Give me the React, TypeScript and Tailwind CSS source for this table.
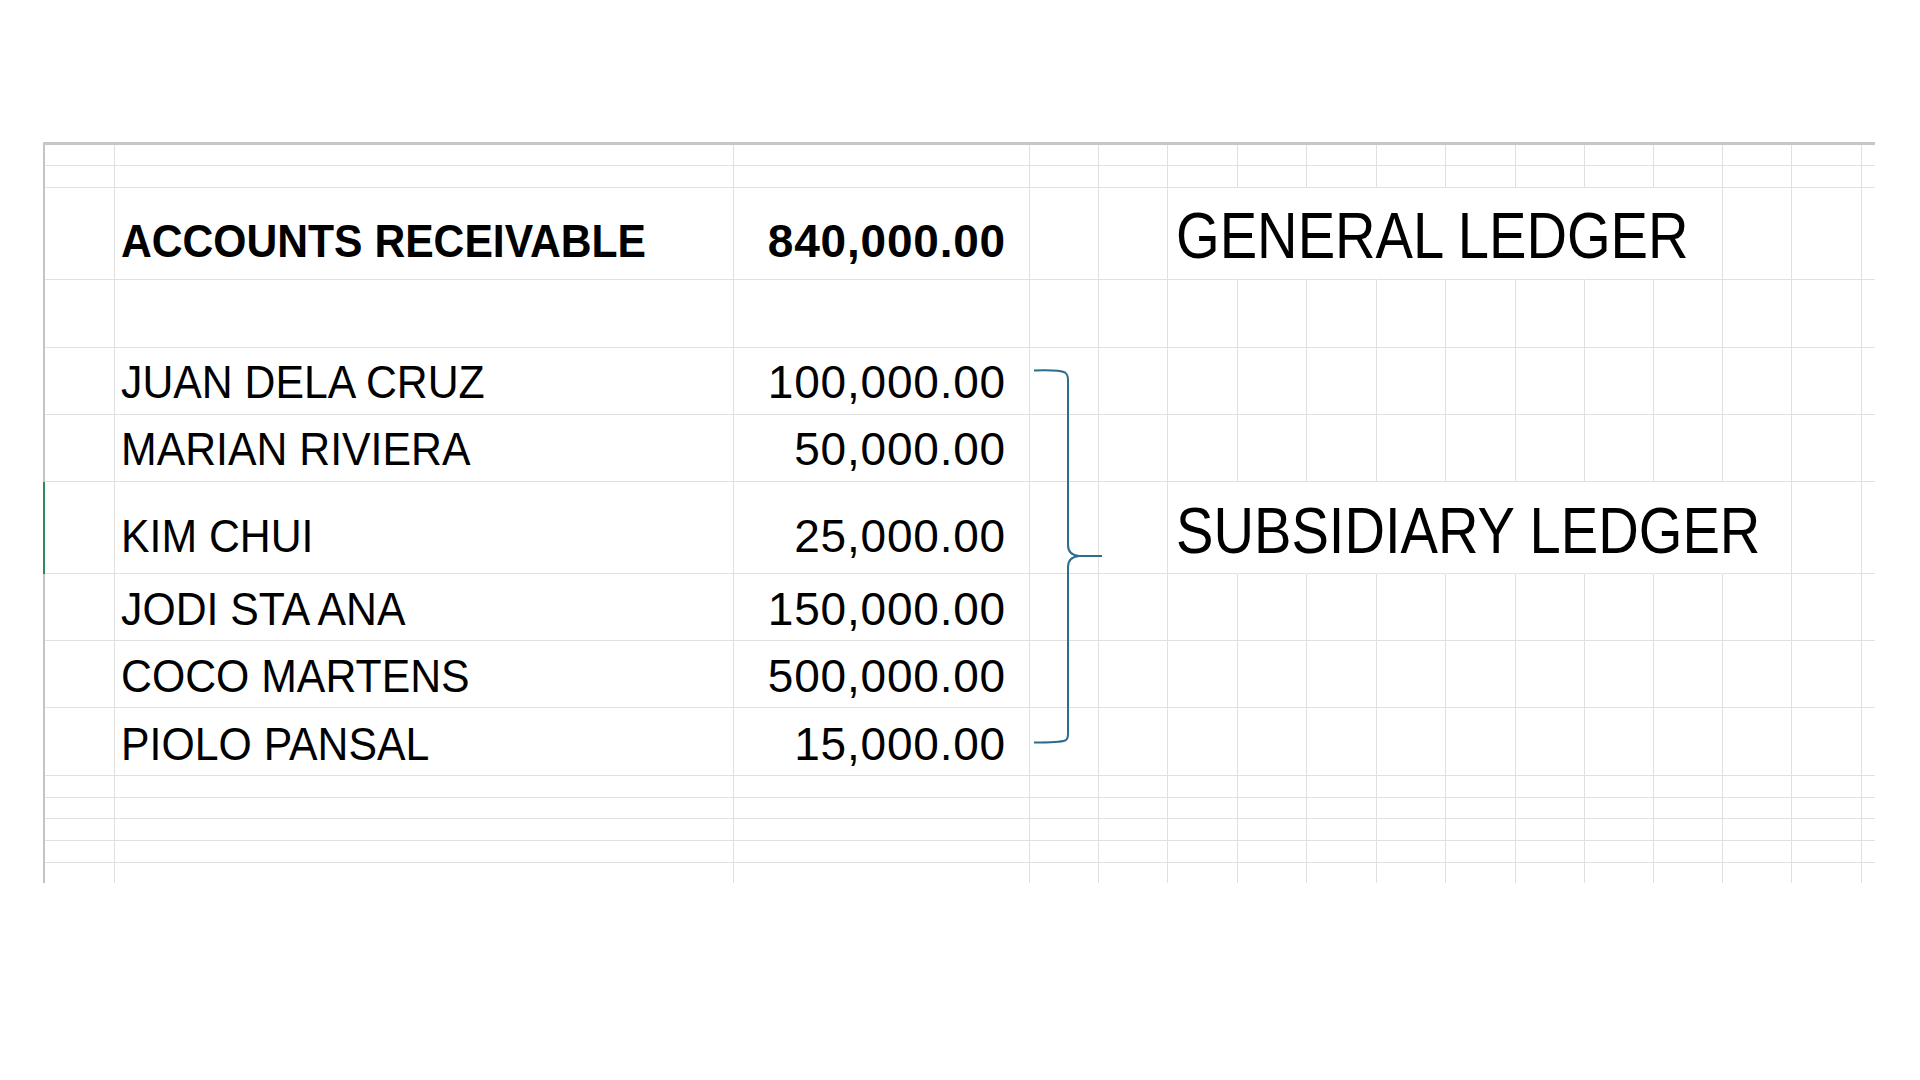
import React from "react";

type Line = {
  height: string;
  name?: string;
  amount?: string;
  ledger?: string;
  header?: boolean;
  selected?: boolean;
  pad?: string;
  ledgerPad?: string;
  overflowTo?: number;
  last?: boolean;
};

// column widths follow the sheet: A, B, C, then the narrow D..P
const GRID =
  "grid grid-cols-[70px_619px_296px_69px_69px_70px_69px_70px_69px_70px_69px_69px_69px_69px_70px_13px]";

const rows: Line[] = [
  { height: "h-[21px]" },
  { height: "h-[22px]" },
  {
    height: "h-[92px]",
    name: "ACCOUNTS RECEIVABLE",
    amount: "840,000.00",
    ledger: "GENERAL LEDGER",
    header: true,
    pad: "pb-[15px]",
    ledgerPad: "pb-[11px]",
    overflowTo: 11,
  },
  { height: "h-[68px]" },
  { height: "h-[67px]", name: "JUAN DELA CRUZ", amount: "100,000.00", pad: "pb-[9px]" },
  { height: "h-[67px]", name: "MARIAN RIVIERA", amount: "50,000.00", pad: "pb-[9px]" },
  {
    height: "h-[92px]",
    name: "KIM CHUI",
    amount: "25,000.00",
    ledger: "SUBSIDIARY LEDGER",
    selected: true,
    pad: "pb-[14px]",
    ledgerPad: "pb-[10px]",
    overflowTo: 12,
  },
  { height: "h-[67px]", name: "JODI STA ANA", amount: "150,000.00", pad: "pb-[8px]" },
  { height: "h-[67px]", name: "COCO MARTENS", amount: "500,000.00", pad: "pb-[8px]" },
  { height: "h-[68px]", name: "PIOLO PANSAL", amount: "15,000.00", pad: "pb-[8px]" },
  { height: "h-[22px]" },
  { height: "h-[21px]" },
  { height: "h-[22px]" },
  { height: "h-[22px]" },
  { height: "h-[20px]", last: true },
];

const font = "font-['Liberation_Sans',Arial,sans-serif] text-black";

function SheetRow({ row }: { row: Line }) {
  const cells = Array.from({ length: 16 }, (_, i) => i);
  return (
    <div
      className={`${GRID} ${row.height} border-l-2 ${
        row.selected ? "border-l-[#2d8a5a]" : "border-l-[#c4c4c4]"
      }`}
    >
      {cells.map((i) => {
        const hidden = row.overflowTo !== undefined && i >= 5 && i <= row.overflowTo;
        const right = i === 15 ? "" : hidden ? "border-r border-r-transparent" : "border-r border-r-[#e0e0e0]";
        const bottom = row.last ? "" : "border-b border-b-[#e0e0e0]";

        if (i === 1 && row.name) {
          return (
            <div key={i} className={`${right} ${bottom} flex items-end pl-[6px] ${row.pad}`}>
              <span
                className={`${font} inline-block origin-left whitespace-nowrap leading-none ${
                  row.header ? "scale-x-[0.907] text-[47px] font-bold" : "scale-x-[0.93] text-[46px]"
                }`}
              >
                {row.name}
              </span>
            </div>
          );
        }
        if (i === 2 && row.amount) {
          return (
            <div key={i} className={`${right} ${bottom} flex items-end justify-end pr-[23px] ${row.pad}`}>
              <span
                className={`${font} text-[46px] leading-none tracking-[0.8px] whitespace-nowrap ${
                  row.header ? "font-bold" : ""
                }`}
              >
                {row.amount}
              </span>
            </div>
          );
        }
        if (i === 5 && row.ledger) {
          return (
            <div key={i} className={`${right} ${bottom} flex items-end pl-[8px] ${row.ledgerPad} overflow-visible`}>
              <span className={`${font} inline-block origin-left scale-x-[0.877] text-[64px] leading-none whitespace-nowrap`}>
                {row.ledger}
              </span>
            </div>
          );
        }
        return <div key={i} className={`${right} ${bottom}`} />;
      })}
    </div>
  );
}

export default function App() {
  return (
    <div className="min-h-screen w-full bg-white pt-[142px] pl-[43px]">
      <div className="relative w-[1832px] border-t-[3px] border-t-[#c6c6c6]">
        {rows.map((row, idx) => (
          <SheetRow key={idx} row={row} />
        ))}

        {/* curly brace grouping the subsidiary accounts */}
        <svg
          className="pointer-events-none absolute left-[987px] top-[220px]"
          width="80"
          height="385"
          viewBox="1030 365 80 385"
          fill="none"
        >
          <path
            d="M1034 370.5 C1048 370 1060 370 1065 372.5 Q1068 374.5 1068 380 L1068 545 Q1068 555 1079 556 L1102 556"
            stroke="#2a6d8f"
            strokeWidth="2"
          />
          <path
            d="M1102 556 L1079 556 Q1068 557 1068 567 L1068 734 Q1068 739.5 1065 740.5 C1060 742.5 1048 742.5 1034 742.5"
            stroke="#2a6d8f"
            strokeWidth="2"
          />
        </svg>
      </div>
    </div>
  );
}
